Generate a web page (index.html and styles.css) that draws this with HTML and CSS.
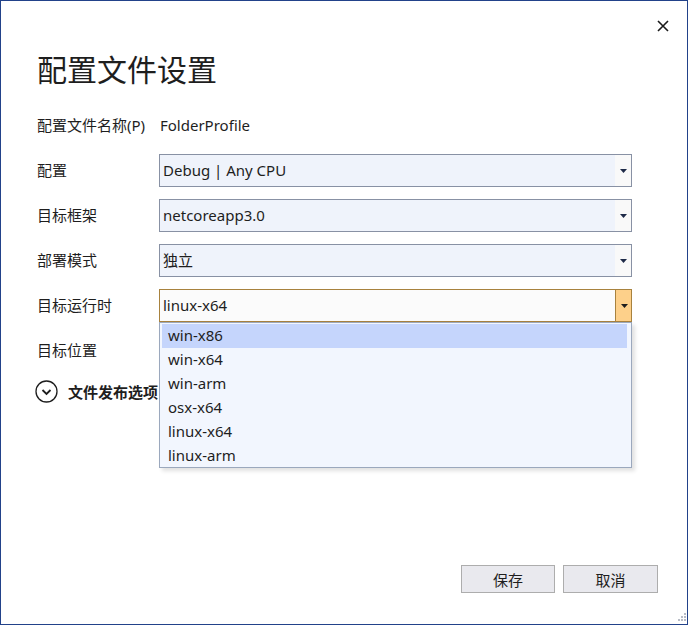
FILE: index.html
```html
<!DOCTYPE html>
<html lang="zh-CN">
<head>
<meta charset="utf-8">
<title>配置文件设置</title>
<link rel="stylesheet" href="styles.css">
</head>
<body>
<div class="dialog">
  <div class="topbar">
    <button class="close" aria-label="关闭">
      <svg width="12" height="12" viewBox="0 0 12 12"><path d="M1 1 L11 11 M11 1 L1 11" stroke="#1a1a1a" stroke-width="1.6" fill="none"/></svg>
    </button>
  </div>
  <h1 class="title">配置文件设置</h1>
  <div class="form">
    <div class="label">配置文件名称(P)</div>
    <div class="value">FolderProfile</div>

    <div class="label">配置</div>
    <div class="combo"><span class="combo-text">Debug | Any CPU</span><span class="combo-btn"><svg width="7" height="4" viewBox="0 0 7 4"><path d="M0 0 H7 L3.5 4 Z" fill="#1e2a48"/></svg></span></div>

    <div class="label">目标框架</div>
    <div class="combo"><span class="combo-text">netcoreapp3.0</span><span class="combo-btn"><svg width="7" height="4" viewBox="0 0 7 4"><path d="M0 0 H7 L3.5 4 Z" fill="#1e2a48"/></svg></span></div>

    <div class="label">部署模式</div>
    <div class="combo"><span class="combo-text">独立</span><span class="combo-btn"><svg width="7" height="4" viewBox="0 0 7 4"><path d="M0 0 H7 L3.5 4 Z" fill="#1e2a48"/></svg></span></div>

    <div class="label">目标运行时</div>
    <div class="combo-wrap">
      <div class="combo active"><span class="combo-text">linux-x64</span><span class="combo-btn"><svg width="7" height="4" viewBox="0 0 7 4"><path d="M0 0 H7 L3.5 4 Z" fill="#1e1e1e"/></svg></span></div>
      <ul class="menu">
        <li class="item selected">win-x86</li>
        <li class="item">win-x64</li>
        <li class="item">win-arm</li>
        <li class="item">osx-x64</li>
        <li class="item">linux-x64</li>
        <li class="item">linux-arm</li>
      </ul>
    </div>

    <div class="label">目标位置</div>
    <div class="textbox"></div>
  </div>
  <div class="expander">
    <span class="chev">
      <svg width="23" height="23" viewBox="0 0 23 23"><circle cx="11.5" cy="11.5" r="10.5" stroke="#1e1e1e" stroke-width="1.3" fill="none"/><path d="M7.5 10 L11.5 14 L15.5 10" stroke="#1e1e1e" stroke-width="1.8" fill="none"/></svg>
    </span>
    <span class="exp-text">文件发布选项</span>
  </div>
  <div class="spacer"></div>
  <div class="footer">
    <button class="btn">保存</button>
    <button class="btn btn-wide">取消</button>
  </div>
  <div class="grip">
    <svg width="10" height="10" viewBox="0 0 10 10" fill="#b8bcc6">
      <rect x="8" y="0" width="2" height="2"/>
      <rect x="5" y="3" width="2" height="2"/><rect x="8" y="3" width="2" height="2"/>
      <rect x="2" y="6" width="2" height="2"/><rect x="5" y="6" width="2" height="2"/><rect x="8" y="6" width="2" height="2"/>
    </svg>
  </div>
</div>
</body>
</html>
```

FILE: styles.css
```css
* { box-sizing: border-box; }
html, body { margin: 0; padding: 0; background: #ffffff; }
body {
  font-family: "Noto Sans", "Noto Sans CJK SC", sans-serif;
  color: #1e1e1e;
  font-size: 15px;
}
.dialog {
  position: relative;
  width: 688px;
  height: 625px;
  border: 1px solid #22428a;
  display: flex;
  flex-direction: column;
  background: #fff;
}
.topbar {
  height: 47px;
  display: flex;
  justify-content: flex-end;
  align-items: flex-start;
  padding: 19px 18px 0 0;
}
.close {
  border: 0;
  background: transparent;
  padding: 0;
  width: 12px;
  height: 12px;
  display: block;
}
.close svg { display: block; }
.title {
  margin: 0 0 0 36px;
  font-family: "Noto Sans CJK SC", sans-serif;
  font-weight: 400;
  font-size: 30px;
  line-height: 40px;
  height: 40px;
  color: #1e1e1e;
}
.form {
  margin: 21px 0 0 36px;
  display: grid;
  grid-template-columns: 122px 473px;
  grid-auto-rows: 33px;
  row-gap: 12px;
}
.form > .label:first-child, .form > .value { height: 32px; }
.label {
  display: flex;
  align-items: center;
  font-size: 15px;
  line-height: 20px;
  padding-bottom: 1px;
  color: #1e1e1e;
}
.value {
  display: flex;
  align-items: center;
  padding-left: 1px;
  padding-bottom: 1px;
}
.combo {
  height: 33px;
  border: 1px solid #8891a4;
  background: #eff3fb;
  display: flex;
  align-items: stretch;
}
.combo-text {
  flex: 1;
  display: flex;
  align-items: center;
  padding-left: 3px;
  padding-bottom: 2px;
}
.combo-btn {
  width: 16px;
  background: #f9f9f9;
  display: flex;
  align-items: center;
  justify-content: center;
}
.combo-btn svg { display: block; margin-left: 1px; }
.combo.active {
  border-color: #a8823e;
  background: #fbfbfb;
}
.combo.active .combo-btn {
  background: #fdd08a;
  border-left: 1px solid #a8823e;
  width: 16px;
}
.combo-wrap { position: relative; height: 33px; }
.menu {
  position: absolute;
  left: 0;
  top: 33px;
  width: 473px;
  height: 146px;
  margin: 0;
  padding: 1px 4px 0 2px;
  list-style: none;
  background: #f2f6fe;
  border: 1px solid #9ba8bd;
  box-shadow: 3px 3px 4px rgba(0, 0, 0, 0.12);
  z-index: 5;
}
.item {
  height: 24px;
  line-height: 22px;
  padding-left: 6px;
  color: #1e1e1e;
}
.item.selected { background: #c5d5fc; }
.textbox {
  height: 33px;
  border: 1px solid #8891a4;
  background: #eff3fb;
}
.expander {
  margin: 12px 0 0 34px;
  height: 24px;
  display: flex;
  align-items: center;
}
.chev { width: 23px; height: 23px; display: block; }
.chev svg { display: block; }
.exp-text {
  margin-left: 10px;
  font-weight: 700;
  font-size: 15px;
}
.spacer { flex: 1; }
.footer {
  display: flex;
  justify-content: flex-end;
  gap: 8px;
  padding: 0 29px 31px 0;
}
.btn {
  width: 94px;
  height: 28px;
  border: 1px solid #adadad;
  background: #e9e9ee;
  font-family: "Noto Sans CJK SC", sans-serif;
  font-size: 15px;
  color: #1e1e1e;
  padding: 0;
}
.btn-wide { width: 95px; }
.grip {
  position: absolute;
  right: 1px;
  bottom: 1px;
  width: 10px;
  height: 10px;
}
.grip svg { display: block; }
```
